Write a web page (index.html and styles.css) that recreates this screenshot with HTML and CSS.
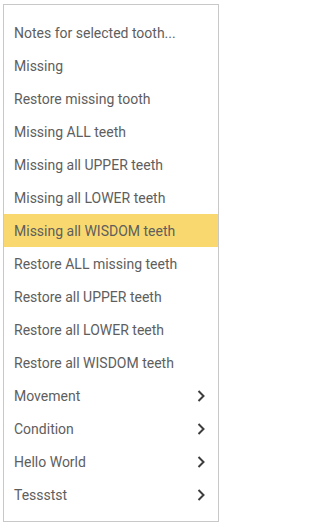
FILE: index.html
```html
<!DOCTYPE html>
<html>
<head>
<meta charset="utf-8">
<link rel="stylesheet" href="styles.css">
</head>
<body>
<ul class="menu">
  <li class="item">Notes for selected tooth...</li>
  <li class="item">Missing</li>
  <li class="item">Restore missing tooth</li>
  <li class="item">Missing ALL teeth</li>
  <li class="item">Missing all UPPER teeth</li>
  <li class="item">Missing all LOWER teeth</li>
  <li class="item active">Missing all WISDOM teeth</li>
  <li class="item">Restore ALL missing teeth</li>
  <li class="item">Restore all UPPER teeth</li>
  <li class="item">Restore all LOWER teeth</li>
  <li class="item">Restore all WISDOM teeth</li>
  <li class="item sub">Movement<svg class="chev" viewBox="0 0 10 12"><polyline points="1.5,1 6.5,6 1.5,11"/></svg></li>
  <li class="item sub">Condition<svg class="chev" viewBox="0 0 10 12"><polyline points="1.5,1 6.5,6 1.5,11"/></svg></li>
  <li class="item sub">Hello World<svg class="chev" viewBox="0 0 10 12"><polyline points="1.5,1 6.5,6 1.5,11"/></svg></li>
  <li class="item sub">Tessstst<svg class="chev" viewBox="0 0 10 12"><polyline points="1.5,1 6.5,6 1.5,11"/></svg></li>
</ul>
</body>
</html>
```

FILE: styles.css
```css
html, body {
  margin: 0;
  padding: 0;
  background: #ffffff;
}
.menu {
  list-style: none;
  margin: 4px 0 0 3px;
  padding: 11px 0 10px 0;
  width: 214px;
  border: 1px solid #c8c8c8;
  background: #ffffff;
  font-family: Roboto, "Liberation Sans", sans-serif;
  font-size: 14px;
  color: #5e5e5e;
}
.item {
  height: 33px;
  display: flex;
  align-items: center;
  padding: 0 0 0 10px;
  white-space: nowrap;
}
.item.active {
  background: #f9d96f;
}
.item.sub {
  justify-content: space-between;
  padding-right: 11px;
}
.chev {
  width: 10px;
  height: 12px;
  fill: none;
  stroke: #3d3d3d;
  stroke-width: 2;
}
```
